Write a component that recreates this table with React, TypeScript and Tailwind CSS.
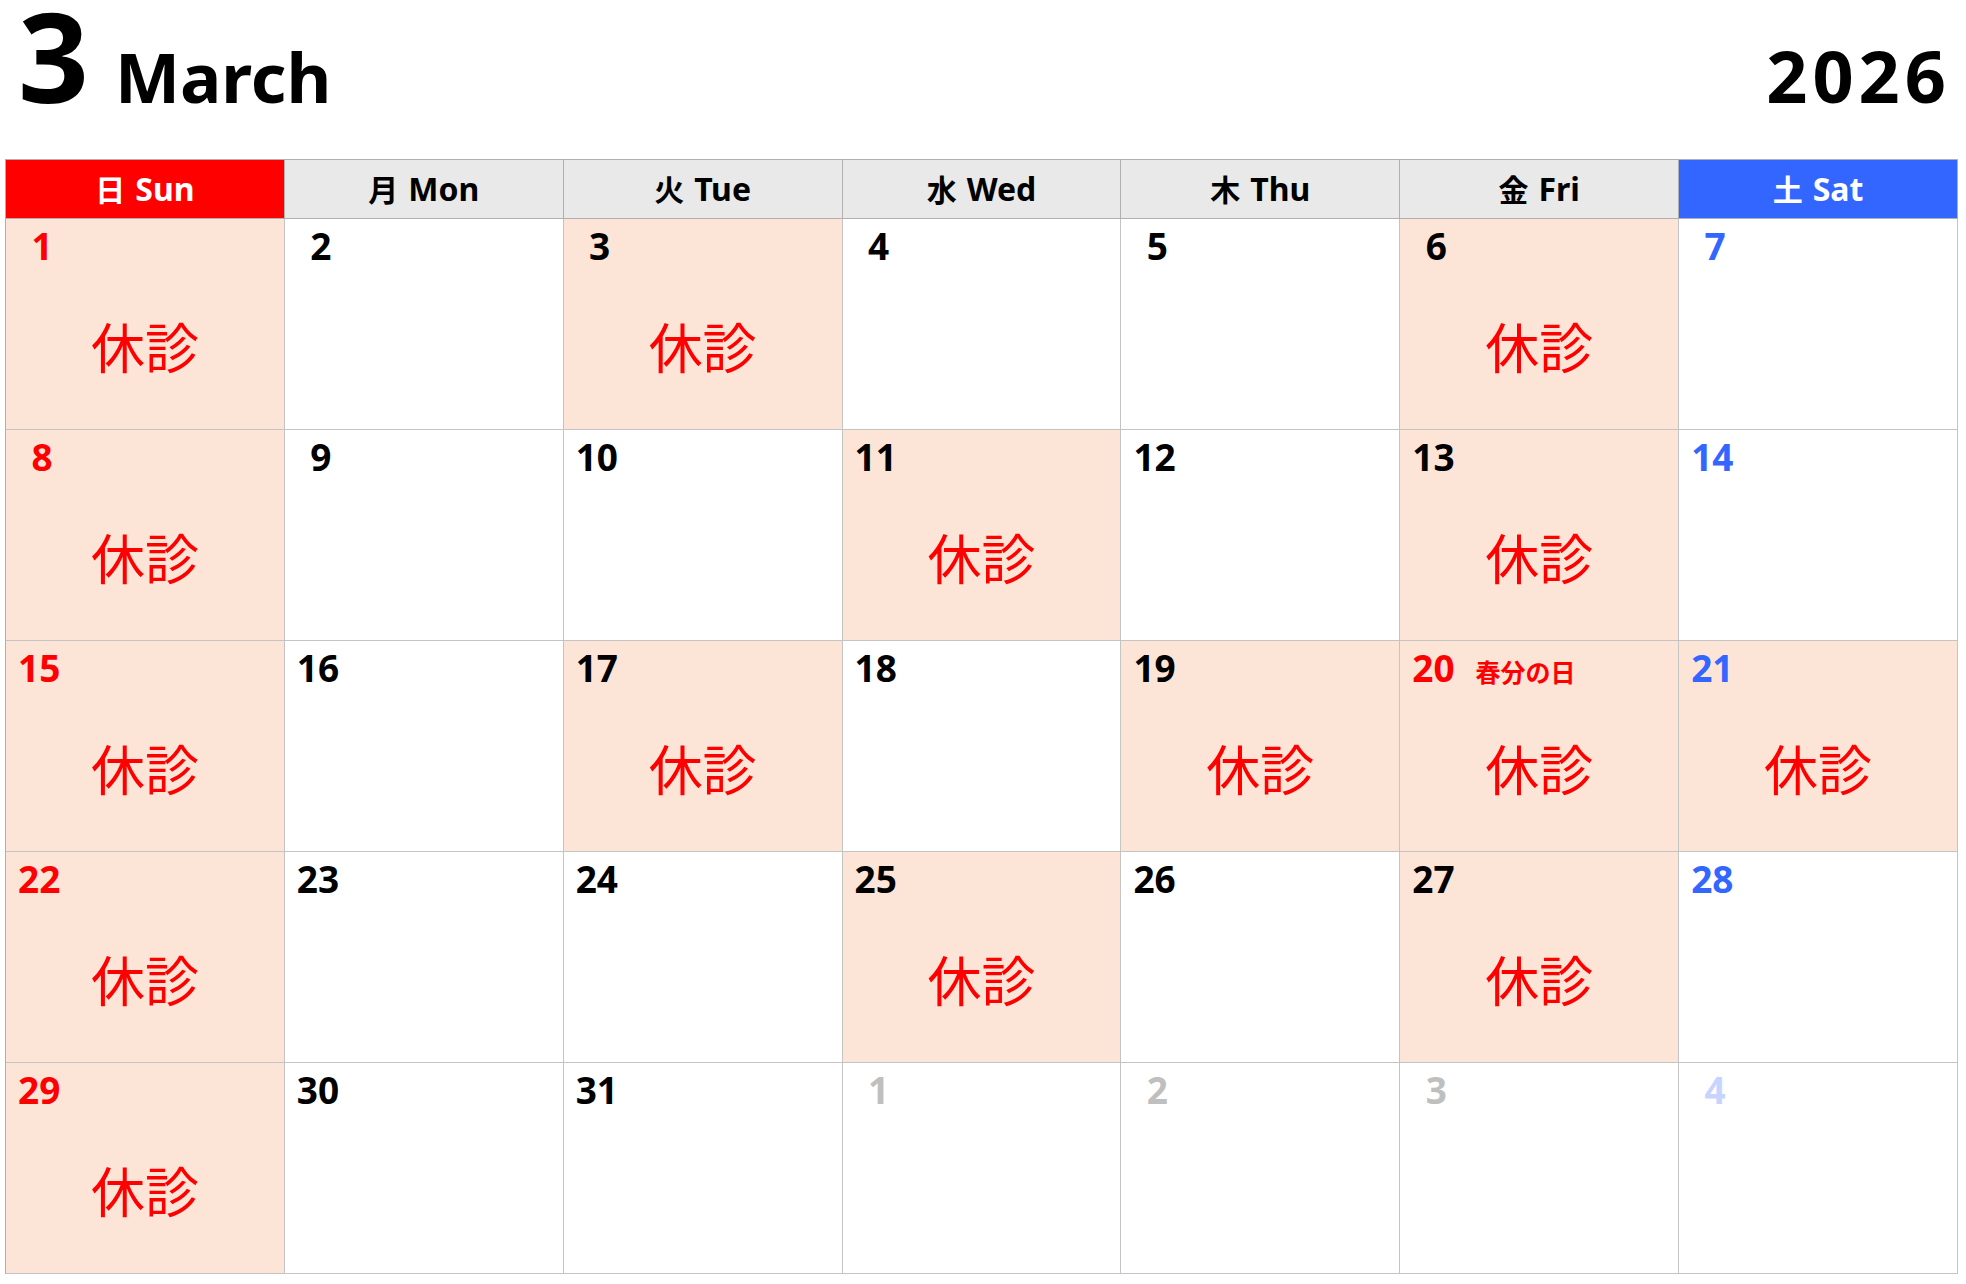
import React from "react";

type Cell = {
  n: number;
  kind: "sun" | "sat" | "wk" | "nextwk" | "nextsat";
  closed?: boolean;
  holiday?: string;
  red?: boolean;
};

const closedSet = new Set([1, 3, 6, 8, 11, 13, 15, 17, 19, 20, 21, 22, 25, 27, 29]);

function buildCells(): Cell[] {
  const cells: Cell[] = [];
  for (let d = 1; d <= 31; d++) {
    const dow = (d - 1) % 7;
    const kind = dow === 0 ? "sun" : dow === 6 ? "sat" : "wk";
    cells.push({
      n: d,
      kind,
      closed: closedSet.has(d),
      holiday: d === 20 ? "春分の日" : undefined,
      red: d === 20,
    });
  }
  cells.push({ n: 1, kind: "nextwk" });
  cells.push({ n: 2, kind: "nextwk" });
  cells.push({ n: 3, kind: "nextwk" });
  cells.push({ n: 4, kind: "nextsat" });
  return cells;
}

const headers = [
  { jp: "日", en: "Sun", cls: "bg-[#ff0000] text-white" },
  { jp: "月", en: "Mon", cls: "bg-[#e9e9e9] text-black" },
  { jp: "火", en: "Tue", cls: "bg-[#e9e9e9] text-black" },
  { jp: "水", en: "Wed", cls: "bg-[#e9e9e9] text-black" },
  { jp: "木", en: "Thu", cls: "bg-[#e9e9e9] text-black" },
  { jp: "金", en: "Fri", cls: "bg-[#e9e9e9] text-black" },
  { jp: "土", en: "Sat", cls: "bg-[#3366ff] text-white" },
];

function DayCell({ c }: { c: Cell }) {
  const numColor =
    c.kind === "sun" || c.red
      ? "text-[#ff0000]"
      : c.kind === "sat"
      ? "text-[#3366ff]"
      : c.kind === "nextwk"
      ? "text-[#bfbfbf]"
      : c.kind === "nextsat"
      ? "text-[#c6d4ff]"
      : "text-black";
  const single = c.n < 10;
  return (
    <div
      className={`h-[211px] border-r border-b border-[#c4c4c4] flex flex-col ${
        c.closed ? "bg-[#fce4d6]" : "bg-white"
      }`}
    >
      <div className="flex items-baseline pl-[12px] pt-[8px] h-[52px]">
        <span
          className={`inline-block ${single ? "w-[48px] text-center" : ""} text-[37px] leading-none font-bold ${numColor}`}
        >
          {c.n}
        </span>
        {c.holiday && (
          <span className="ml-[21px] text-[25px] leading-none font-bold text-[#ff0000]">
            {c.holiday}
          </span>
        )}
      </div>
      {c.closed && (
        <div className="mt-[50px] text-center text-[54px] leading-none font-normal text-[#ff0000]">
          休診
        </div>
      )}
    </div>
  );
}

export default function App() {
  const cells = buildCells();
  return (
    <div
      className="w-[1966px] h-[1284px] bg-white overflow-hidden"
      style={{ fontFamily: '"Noto Sans", "Noto Sans CJK JP", sans-serif' }}
    >
      <div className="h-[159px] flex items-baseline justify-between pl-[18px] pr-[15px]">
        <div className="flex items-baseline">
          <span className="text-[124px] leading-[110px] font-bold text-black">3</span>
          <span className="ml-[26px] text-[69px] leading-none font-bold text-black">March</span>
        </div>
        <span className="text-[72px] leading-none font-bold text-black tracking-[5px]">2026</span>
      </div>
      <div className="ml-[5px] w-[1953px] border-l border-t border-[#b0b0b0] grid grid-cols-7">
        {headers.map((h) => (
          <div
            key={h.en}
            className={`h-[59px] border-r border-b border-[#b0b0b0] flex items-center justify-center text-[32px] font-bold ${h.cls}`}
          >
            <span className="text-[30px] mr-[10px]">{h.jp}</span>
            <span>{h.en}</span>
          </div>
        ))}
        {cells.map((c, i) => (
          <DayCell key={i} c={c} />
        ))}
      </div>
    </div>
  );
}
